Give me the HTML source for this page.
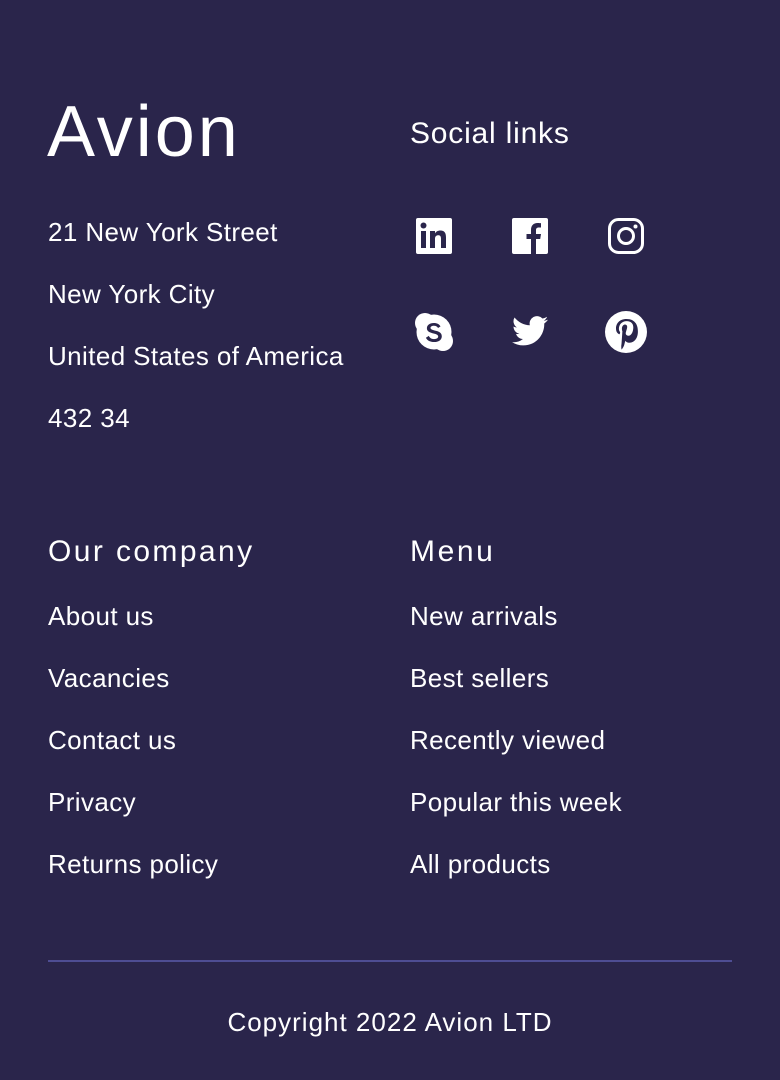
<!DOCTYPE html>
<html><head><meta charset="utf-8"><style>
body{margin:0;width:780px;height:1080px;background:#2a254b;position:relative;overflow:hidden;font-family:"Liberation Sans",sans-serif;color:#fff}
.t{position:absolute;line-height:1;font-size:26px;white-space:nowrap;letter-spacing:0.4px}
.h{font-size:30px;letter-spacing:2.4px}
.logo{position:absolute;left:47px;top:96px;font-size:72px;line-height:1;letter-spacing:3px}
svg{position:absolute}
.hr{position:absolute;left:48px;top:960px;width:684px;height:2px;background:#4e4d93}
</style></head><body>
<div class="logo">Avion</div>
<div class="t" style="left:48px;top:219px">21 New York Street</div>
<div class="t" style="left:48px;top:281px">New York City</div>
<div class="t" style="left:48px;top:343px">United States of America</div>
<div class="t" style="left:48px;top:405px">432 34</div>
<div class="t h" style="left:410px;top:119px;letter-spacing:0.8px">Social links</div>

<svg style="left:416px;top:218px" width="36" height="36" viewBox="0 0 36 36"><rect width="36" height="36" rx="2" fill="#fff"/><rect x="5" y="13" width="5" height="17" fill="#2a254b"/><circle cx="7.5" cy="7.5" r="3" fill="#2a254b"/><path d="M14 13h5v2.5c1-2 3-3 5.5-3 4 0 5.5 2.5 5.5 7V30h-5v-9.5c0-2-.7-3.300-2.700-3.300-2 0-3.300 1.300-3.300 3.500V30h-5z" fill="#2a254b"/></svg>
<svg style="left:512px;top:218px" width="36" height="36" viewBox="0 0 36 36"><rect width="36" height="36" rx="2" fill="#fff"/><path d="M19 36V21h-4.5v-5H19v-4c0-4.5 2.5-7 6.5-7 1.8 0 3.5.2 3.5.2v4.3h-2.3c-2 0-2.7 1.2-2.7 2.5V16h5l-.8 5H24v15z" fill="#2a254b"/></svg>
<svg style="left:608px;top:218px" width="36" height="36" viewBox="0 0 36 36"><rect x="1.5" y="1.5" width="33" height="33" rx="9" fill="none" stroke="#fff" stroke-width="3"/><circle cx="18" cy="18" r="7.5" fill="none" stroke="#fff" stroke-width="3"/><circle cx="27.5" cy="8.5" r="2" fill="#fff"/></svg>

<svg style="left:414px;top:312px" width="40" height="40" viewBox="0 0 40 40"><circle cx="11" cy="11" r="10" fill="#fff"/><circle cx="29" cy="29" r="10" fill="#fff"/><circle cx="20" cy="20" r="17.5" fill="#fff"/><path d="M26.5 14.5c-1-2.300-3.600-3.500-6.600-3.500-4.300 0-7 2.100-7 5.300 0 6.300 11.300 4.200 11.300 8.200 0 1.500-1.600 2.600-4.200 2.600-2.600 0-4.200-1.100-5.200-3.200l-2.900 1.800C13.300 28.500 16.200 30 20.200 30c4.700 0 7.600-2.300 7.600-5.800 0-6.700-11.300-4.700-11.300-8.300 0-1.300 1.400-2.200 3.400-2.200 2.100 0 3.400.8 4.100 2.300z" fill="#2a254b"/></svg>
<svg style="left:512px;top:316px" width="36" height="30" viewBox="0 0 24 20"><path d="M24 2.4c-.9.4-1.800.6-2.800.8 1-.6 1.800-1.600 2.200-2.700-1 .6-2 1-3.100 1.200A4.900 4.900 0 0 0 11.900 6.200 14 14 0 0 1 1.700 1 4.900 4.900 0 0 0 3.200 7.600c-.8 0-1.600-.3-2.200-.6 0 2.400 1.700 4.400 3.900 4.800-.7.2-1.500.2-2.200.1.6 2 2.400 3.400 4.600 3.400A9.900 9.900 0 0 1 0 17.400 14 14 0 0 0 7.500 19.600c9.100 0 14-7.500 14-14v-.6c1-.7 1.800-1.600 2.500-2.600z" fill="#fff"/></svg>
<svg style="left:605px;top:311px" width="42" height="42" viewBox="0 0 42 42"><circle cx="21" cy="21" r="21" fill="#fff"/><path d="M21.5 8C14 8 11 13 11 17.500c0 2.600 1 4.800 3.100 5.700.3.100.6 0 .7-.4l.3-1.200c.1-.4 0-.5-.2-.8-.6-.8-1-1.700-1-3.100 0-4 3-7.600 7.800-7.600 4.300 0 6.600 2.600 6.600 6.100 0 4.600-2 8.500-5 8.500-1.700 0-2.900-1.400-2.500-3.100.5-2 1.400-4.200 1.400-5.700 0-1.300-.7-2.400-2.200-2.400-1.700 0-3.100 1.800-3.100 4.200 0 1.500.5 2.600.5 2.600L16.500 33c-.5 2.200-.1 5 0 5.300 0 .2.200.2.300.1.100-.2 1.800-2.300 2.400-4.400l1.100-4.300c.6 1.100 2.200 2 3.900 2 5.200 0 8.700-4.700 8.700-11C32.900 12.400 28.800 8 21.500 8z" fill="#2a254b"/></svg>

<div class="t h" style="left:48px;top:537px">Our company</div>
<div class="t" style="left:48px;top:603px">About us</div>
<div class="t" style="left:48px;top:665px">Vacancies</div>
<div class="t" style="left:48px;top:727px">Contact us</div>
<div class="t" style="left:48px;top:789px">Privacy</div>
<div class="t" style="left:48px;top:851px">Returns policy</div>

<div class="t h" style="left:410px;top:537px;letter-spacing:2.6px">Menu</div>
<div class="t" style="left:410px;top:603px">New arrivals</div>
<div class="t" style="left:410px;top:665px">Best sellers</div>
<div class="t" style="left:410px;top:727px">Recently viewed</div>
<div class="t" style="left:410px;top:789px">Popular this week</div>
<div class="t" style="left:410px;top:851px">All products</div>

<div class="hr"></div>
<div class="t" style="left:0;width:780px;text-align:center;top:1009px;letter-spacing:1px">Copyright 2022 Avion LTD</div>
</body></html>
